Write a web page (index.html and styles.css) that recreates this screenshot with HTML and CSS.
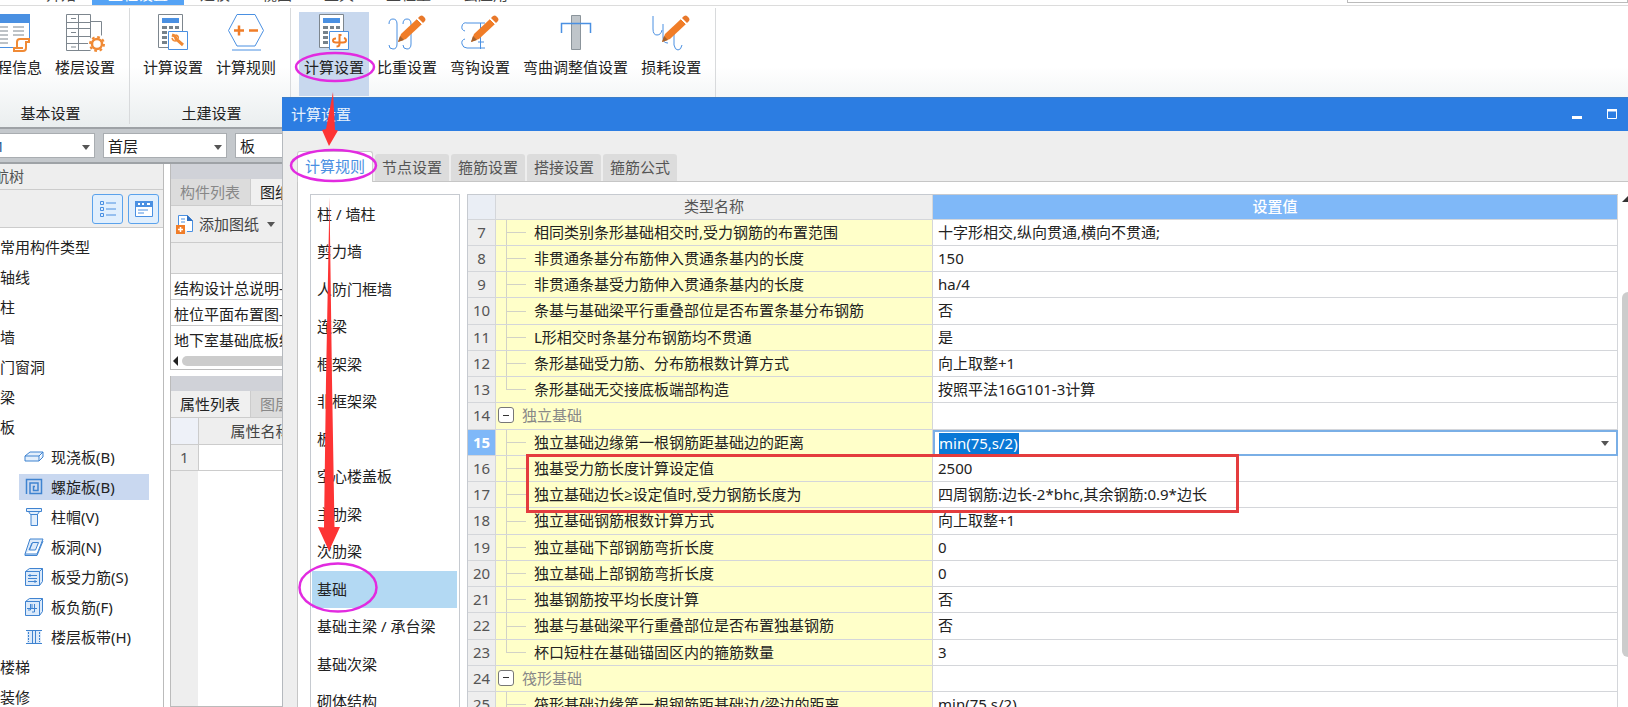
FILE: index.html
```html
<!DOCTYPE html>
<html lang="zh-CN">
<head>
<meta charset="utf-8">
<title>计算设置</title>
<link rel="stylesheet" href="styles.css">
</head>
<body>
<svg width="0" height="0" class="defs" aria-hidden="true">
  <defs>
    <g id="calc">
      <path d="M4.500.5h24v33h-24z" fill="#fff" stroke="#7d868e"/>
      <path d="M8 4h17v5H8z" fill="#4a90e2"/>
      <path d="M8 12h5v3H8zM15 12h4v3h-4zM21 12h4v3h-4zM8 17h5v3H8zM8 22h5v3H8zM8 27h5v3H8z" fill="#76828b"/>
      <path d="M14.500 17.500h19v18h-19z" fill="#fff" stroke="#4a90e2"/>
    </g>
    <g id="pencil">
      <path d="M10 28l3-8 16-15 5 5-16 15z" fill="#f07d28"/>
      <path d="M30 4l2-2q2-1 3 0l2 2q1 2 0 3l-2 2z" fill="#e8782a"/>
      <path d="M28.500 4.500l6 6" stroke="#fff"/>
      <path d="M10 28l2-6 4 4z" fill="#a3622f"/>
    </g>
  </defs>
</svg>

<div class="app">
  <nav class="menu">
    <a class="menu-tab" href="#">开始</a>
    <a class="menu-tab menu-on" href="#">工程设置</a>
    <a class="menu-tab" href="#">建模</a>
    <a class="menu-tab" href="#">视图</a>
    <a class="menu-tab" href="#">工具</a>
    <a class="menu-tab" href="#">工程量</a>
    <a class="menu-tab" href="#">云应用</a>
    <input class="menu-search" type="text" aria-label="搜索">
  </nav>

  <div class="ribbon">
    <section class="group group-first">
      <div class="tools">
        <button class="tool"><svg viewBox="0 0 38 38"><path d="M-2 .5h38.500v33H-2z" fill="#fff" stroke="#4a90e2"/><path d="M-2 0h39v9H-2z" fill="#4a90e2"/><path d="M4 13h11M20 13h11M4 17h11M20 17h11M4 21h11M20 21h11M4 25h11M4 29h11" stroke="#7d868e"/><path d="M22 24h16v14H20V24z" fill="#fff"/><path d="M24 34V28q0-3 3-3h9v3h-3v6q0 3-3 3h-9v-3h9" fill="none" stroke="#f08a35" stroke-width="2"/></svg>工程信息</button>
        <button class="tool"><svg viewBox="0 0 38 38"><path d="M.5.500h24v36H.5zM12.500.500v36M.5 8.500h24M.5 14.500h24M.5 22.500h24M.5 29.500h24M24.500 7.500h11v14M5 4.500h5M5 18.500h5M5 33h5" fill="none" stroke="#7d868e"/><circle cx="31" cy="30" r="9" fill="#fff"/><circle cx="31" cy="30" r="5" fill="none" stroke="#f08a35" stroke-width="2.500"/><circle cx="31" cy="30" r="7" fill="none" stroke="#f08a35" stroke-width="2" stroke-dasharray="2.750 2.750"/></svg>楼层设置</button>
      </div>
      <h2 class="group-name">基本设置</h2>
    </section>
    <section class="group">
      <div class="tools">
        <button class="tool"><svg viewBox="0 0 38 38"><use href="#calc"/><path d="M18 21l3 1 1 3 7 6" fill="none" stroke="#f08a35" stroke-width="3"/><path d="M18 24q1 4 5 2.500M22 21q3 1 2 4" fill="none" stroke="#f08a35" stroke-width="1.500"/></svg>计算设置</button>
        <button class="tool"><svg viewBox="0 0 38 38"><path d="M10 .5h18l8.500 16-8.500 15.500H10L1.500 16.500zM5 36h29" fill="none" stroke="#4a90e2"/><path d="M7 16.500h10M12 11.500v10M22 16.500h9" stroke="#f07d28" stroke-width="2.500"/></svg>计算规则</button>
      </div>
      <h2 class="group-name">土建设置</h2>
    </section>
    <section class="group">
      <div class="tools">
        <button class="tool tool-on"><svg viewBox="0 0 38 38"><use href="#calc"/><path d="M21 24.500q-3 0-3 2t3 2h7q3 0 3-2t-2-2.500M26.500 21h-2v9q0 2.500-3 2.500" fill="none" stroke="#f07d28" stroke-width="2"/></svg>计算设置</button>
        <button class="tool"><svg viewBox="0 0 38 38"><path d="M1 10q0-5 4-5t4 5v20q0 5-4 5t-4-4M15 10q0-5 4-5t4 5v20q0 5-4 5t-4-4" fill="none" stroke="#4a90e2"/><use href="#pencil"/></svg>比重设置</button>
        <button class="tool"><svg viewBox="0 0 38 38"><path d="M4 17q-4-1-3-5t5-3h18M4 25q-4 1-3 5t5 4h18M19.500 9v26M17 28h6" fill="none" stroke="#4a90e2"/><use href="#pencil"/></svg>弯钩设置</button>
        <button class="tool"><svg viewBox="0 0 38 38"><path d="M14.500 1.500h9v34h-9z" fill="#bfc5ca" stroke="#8b949b"/><path d="M4.500 19V9.500h29V19" fill="none" stroke="#4a90e2" stroke-width="1.500"/></svg>弯曲调整值设置</button>
        <button class="tool"><svg viewBox="0 0 38 38"><path d="M1 2v13q0 6 4 6t5-5M11 10v14q0 5 5 5M22 17v14q1 5 4 5t4-5" fill="none" stroke="#4a90e2"/><use href="#pencil"/></svg>损耗设置</button>
      </div>
    </section>
  </div>

  <div class="pickers">
    <div class="picker picker-unit"><select aria-label="单位工程"><option>1</option></select></div>
    <div class="picker"><select aria-label="楼层"><option>首层</option></select></div>
    <div class="picker"><select aria-label="构件"><option>板</option></select></div>
  </div>

  <div class="work">
    <aside class="nav">
      <h2 class="nav-title">导航树</h2>
      <div class="nav-bar">
        <button class="view" aria-label="列表"><svg viewBox="0 0 20 20"><path d="M2.500 2.500h3v3h-3zM2.500 8.500h3v3h-3zM2.500 14.500h3v3h-3zM8 4h10M8 10h10M8 16h10" fill="none" stroke="#4a90e2"/></svg></button>
        <button class="view" aria-label="窗口"><svg viewBox="0 0 20 20"><path d="M1.500 2.500h17v15h-17z" fill="#fff" stroke="#4a90e2"/><path d="M1 2h18v6H1z" fill="#4a90e2"/><path d="M4 5h2M8 5h2M13 5h3" stroke="#fff" stroke-width="2"/><path d="M4 11h10M4 14h6" stroke="#4a90e2"/></svg></button>
      </div>
      <ul class="tree">
        <li>常用构件类型</li>
        <li>轴线</li>
        <li>柱</li>
        <li>墙</li>
        <li>门窗洞</li>
        <li>梁</li>
        <li>板
          <ul class="subtree">
            <li><span class="node"><svg viewBox="0 0 20 20"><path d="M1 9l5-4h13l-4 4zM1 9v5h14V9M15 14l4-4V5" fill="#e3effc" stroke="#3f83d0"/></svg>现浇板(B)</span></li>
            <li><span class="node node-on"><svg viewBox="0 0 20 20"><path d="M2.500 17V2.500h15v14H6V6h8v7.500H9.500v-4H11" fill="none" stroke="#3f83d0" stroke-width="1.500"/></svg>螺旋板(B)</span></li>
            <li><span class="node"><svg viewBox="0 0 20 20"><path d="M2.500 1.500h15v3h-15zM4.500 4.500l2 3h7l2-3M7 7.500h6.500v11H7z" fill="#e3effc" stroke="#3f83d0"/></svg>柱帽(V)</span></li>
            <li><span class="node"><svg viewBox="0 0 20 20"><path d="M6 2h13l-6 15H1zM1 17v1.500h12L19 4M8.500 5.500h6l-3 7.500h-6z" fill="#dceafa" stroke="#3f83d0"/><path d="M8 6l-3 7" stroke="#3f83d0"/></svg>板洞(N)</span></li>
            <li><span class="node"><svg viewBox="0 0 20 20"><path d="M1.500 4.500l4-3h13v13l-3 4M15.500 4.500l3-3M1.500 4.500h14v14h-14z" fill="#dceafa" stroke="#3f83d0"/><path d="M4 8.500h9M4 14.500h9M4 11.500h9M6 7v3M11 13v3" stroke="#3f83d0"/></svg>板受力筋(S)</span></li>
            <li><span class="node"><svg viewBox="0 0 20 20"><path d="M1.500 4.500l4-3h13v13l-3 4M15.500 4.500l3-3M1.500 4.500h14v14h-14z" fill="#dceafa" stroke="#3f83d0"/><path d="M6.500 7v6H4M10.500 7v8H8M3 11.500h10M8 7v4" fill="none" stroke="#3f83d0"/></svg>板负筋(F)</span></li>
            <li><span class="node"><svg viewBox="0 0 20 20"><path d="M3 3h14v14H3z" fill="#dceafa"/><path d="M2 3.500h16M2 16.500h16M8.500 4v12M11.500 4v12" stroke="#3f83d0"/><path d="M4.500 5v10M15.500 5v10" stroke="#3f83d0" stroke-dasharray="2 1"/></svg>楼层板带(H)</span></li>
          </ul>
        </li>
        <li>楼梯</li>
        <li>装修</li>
      </ul>
    </aside>

    <div class="side">
      <section class="panel">
        <div class="panel-cap"></div>
        <div class="panel-tabs"><button class="ptab">构件列表</button><button class="ptab ptab-on">图纸管理</button></div>
        <button class="add"><svg viewBox="0 0 20 20"><path d="M3.500 11V1.500h9l5 5v11H12" fill="#fff" stroke="#4a90e2"/><path d="M12 1v6h6z" fill="#2f6fc0"/><path d="M6 5h4M6 8h4" stroke="#4a90e2"/><path d="M1 11h9v9H1z" fill="#f07d28"/><path d="M3 15.500h5M5.500 13v5" stroke="#fff" stroke-width="1.500"/></svg>添加图纸<i class="caret"></i></button>
        <div class="sheet-head"></div>
        <ul class="sheets">
          <li>结构设计总说明-1</li>
          <li>桩位平面布置图-1</li>
          <li>地下室基础底板结构</li>
        </ul>
        <div class="hscroll"><i class="hscroll-arrow"></i><i class="hscroll-bar"></i></div>
      </section>
      <section class="panel panel-props">
        <div class="panel-cap"></div>
        <div class="panel-tabs"><button class="ptab ptab-on">属性列表</button><button class="ptab">图层管理</button></div>
        <table class="props">
          <thead><tr><th class="props-no"></th><th class="props-name">属性名称</th></tr></thead>
          <tbody><tr><td class="props-no">1</td><td></td></tr></tbody>
        </table>
        <div class="props-rest"></div>
      </section>
    </div>
  </div>

  <div class="dialog" role="dialog" aria-labelledby="dialog-title">
    <header class="title">
      <h1 id="dialog-title">计算设置</h1>
      <button class="win" aria-label="最小化"><svg viewBox="0 0 12 12"><path d="M1 8h10v3H1z" fill="#fff"/></svg></button>
      <button class="win" aria-label="最大化"><svg viewBox="0 0 12 12"><path d="M1.500 2h9v8.500h-9z" fill="none" stroke="#fff"/><path d="M1 1h10v2.500H1z" fill="#fff"/></svg></button>
    </header>
    <div class="tabs" role="tablist">
      <button class="tab tab-on" role="tab">计算规则</button>
      <button class="tab" role="tab">节点设置</button>
      <button class="tab" role="tab">箍筋设置</button>
      <button class="tab" role="tab">搭接设置</button>
      <button class="tab" role="tab">箍筋公式</button>
    </div>
    <div class="pane">
      <ul class="kinds">
        <li>柱 / 墙柱</li>
        <li>剪力墙</li>
        <li>人防门框墙</li>
        <li>连梁</li>
        <li>框架梁</li>
        <li>非框架梁</li>
        <li>板</li>
        <li>空心楼盖板</li>
        <li>主肋梁</li>
        <li>次肋梁</li>
        <li class="kind-on">基础</li>
        <li>基础主梁 / 承台梁</li>
        <li>基础次梁</li>
        <li>砌体结构</li>
      </ul>
      <div class="grid">
        <table class="rules">
          <colgroup><col class="col-no"><col class="col-name"><col></colgroup>
          <thead><tr><th></th><th>类型名称</th><th class="th-on">设置值</th></tr></thead>
          <tbody>
            <tr><th>7</th><td class="leaf">相同类别条形基础相交时,受力钢筋的布置范围</td><td>十字形相交,纵向贯通,横向不贯通;</td></tr>
            <tr><th>8</th><td class="leaf">非贯通条基分布筋伸入贯通条基内的长度</td><td>150</td></tr>
            <tr><th>9</th><td class="leaf">非贯通条基受力筋伸入贯通条基内的长度</td><td>ha/4</td></tr>
            <tr><th>10</th><td class="leaf">条基与基础梁平行重叠部位是否布置条基分布钢筋</td><td>否</td></tr>
            <tr><th>11</th><td class="leaf">L形相交时条基分布钢筋均不贯通</td><td>是</td></tr>
            <tr><th>12</th><td class="leaf">条形基础受力筋、分布筋根数计算方式</td><td>向上取整+1</td></tr>
            <tr><th>13</th><td class="leaf leaf-last">条形基础无交接底板端部构造</td><td>按照平法16G101-3计算</td></tr>
            <tr><th>14</th><td class="branch"><div class="branch-in"><button class="fold" aria-label="折叠"></button>独立基础</div></td><td></td></tr>
            <tr><th class="no-on">15</th><td class="leaf">独立基础边缘第一根钢筋距基础边的距离</td><td class="edit"><div class="combo"><input type="text" value="min(75,s/2)" aria-label="设置值"><button class="drop" aria-label="展开"><i class="caret"></i></button></div></td></tr>
            <tr><th>16</th><td class="leaf">独基受力筋长度计算设定值</td><td>2500</td></tr>
            <tr><th>17</th><td class="leaf">独立基础边长≥设定值时,受力钢筋长度为</td><td>四周钢筋:边长-2*bhc,其余钢筋:0.9*边长</td></tr>
            <tr><th>18</th><td class="leaf">独立基础钢筋根数计算方式</td><td>向上取整+1</td></tr>
            <tr><th>19</th><td class="leaf">独立基础下部钢筋弯折长度</td><td>0</td></tr>
            <tr><th>20</th><td class="leaf">独立基础上部钢筋弯折长度</td><td>0</td></tr>
            <tr><th>21</th><td class="leaf">独基钢筋按平均长度计算</td><td>否</td></tr>
            <tr><th>22</th><td class="leaf">独基与基础梁平行重叠部位是否布置独基钢筋</td><td>否</td></tr>
            <tr><th>23</th><td class="leaf leaf-last">杯口短柱在基础锚固区内的箍筋数量</td><td>3</td></tr>
            <tr><th>24</th><td class="branch"><div class="branch-in"><button class="fold" aria-label="折叠"></button>筏形基础</div></td><td></td></tr>
            <tr><th>25</th><td class="leaf">筏形基础边缘第一根钢筋距基础边/梁边的距离</td><td>min(75,s/2)</td></tr>
          </tbody>
        </table>
      </div>
      <div class="vscroll"><i class="vscroll-arrow"></i><i class="vscroll-bar"></i></div>
    </div>
  </div>

  <svg class="marks" width="1628" height="707" viewBox="0 0 1628 707" aria-hidden="true">
    <g fill="none" stroke="#e22be0" stroke-width="2.500">
      <ellipse cx="335" cy="67" rx="39" ry="14"/>
      <ellipse cx="333.500" cy="165.500" rx="42.500" ry="15.500"/>
      <ellipse cx="338" cy="587.500" rx="38.500" ry="24"/>
    </g>
    <g fill="#fd3434">
      <path d="M333 92l2 38 3 .5-9 15.500-7-16 4-1z"/>
      <path d="M329.500 197l2.500 183 2.500 147h5.500l-11 24-11-24 6 .5L326 380z"/>
    </g>
    <path d="M527.500 455.500h710v56h-710z" fill="none" stroke="#e43c3e" stroke-width="3"/>
  </svg>
</div>
</body>
</html>
```

FILE: styles.css
```css
* {
  box-sizing: border-box;
}

body {
  margin: 0;
  font-family: "Noto Sans", "Open Sans", "Noto Sans CJK SC", sans-serif;
  font-size: 15px;
  line-height: 20px;
  color: #222;
}

button,
input,
select {
  margin: 0;
  padding: 0;
  border: 0;
  background: none;
  font: inherit;
  color: inherit;
}

h1,
h2 {
  margin: 0;
  font-size: 15px;
  font-weight: 400;
}

ul {
  margin: 0;
  padding: 0;
  list-style: none;
}

.defs {
  position: absolute;
}

.app {
  position: relative;
  display: flex;
  flex-direction: column;
  height: 100vh;
  overflow: hidden;
  background: #fff;
  white-space: nowrap;
}

/* Menu strip */
.menu {
  display: flex;
  align-items: flex-end;
  flex: none;
  height: 6px;
  padding-left: 30px;
  border-bottom: 1px solid #dcdcdc;
  overflow: hidden;
}

.menu-tab {
  padding: 0 16px;
  line-height: 22px;
  color: #444;
  text-decoration: none;
}

.menu-on {
  background: #55a3f5;
  color: #fff;
}

.menu-search {
  width: 281px;
  height: 20px;
  margin: 0 0 2px auto;
  border: 1px solid #bbb;
}

/* Ribbon */
.ribbon {
  display: flex;
  flex: none;
  height: 121px;
  background: linear-gradient(#fff 50%, #eaeeef);
}

.group {
  display: flex;
  flex-direction: column;
  margin: 2px 0 3px;
  padding: 4px 9px 0 8px;
  border-right: 1px solid #d8dadc;
}

.group-first {
  margin-left: -31px;
}

.tools {
  display: flex;
  gap: 3px;
}

.tool {
  display: flex;
  flex-direction: column;
  align-items: center;
  height: 84px;
  padding: 2px 5px;
  line-height: 24px;
}

.tool svg {
  width: 38px;
  height: 38px;
  margin-bottom: 3px;
  overflow: visible;
}

.tool-on {
  background: #c8d8ee;
}

.group-name {
  margin-top: auto;
  padding-left: 4px;
  line-height: 22px;
  text-align: center;
}

/* Drop-down row */
.pickers {
  display: flex;
  gap: 8px;
  flex: none;
  height: 37px;
  padding: 4px 0 4px;
  border-top: 2px solid #9ea2a6;
  border-bottom: 2px solid #9ea2a6;
  background: #c4c8cc;
}

.picker {
  position: relative;
  width: 124px;
  border: 1px solid #a9adb1;
  background: #fff;
}

.picker-unit {
  margin-left: -29px;
}

.picker select {
  width: 100%;
  height: 100%;
  padding: 0 4px;
  appearance: none;
}

.picker-unit select {
  padding-left: 24px;
  color: #2a5d92;
}

.picker::after,
.caret {
  border: 4px solid transparent;
  border-top: 5px solid #555;
  border-bottom: 0;
}

.picker::after {
  content: "";
  position: absolute;
  top: 11px;
  right: 4px;
}

/* Work area */
.work {
  display: flex;
  gap: 6px;
  flex: 1;
  min-height: 0;
}

.nav {
  width: 164px;
  flex: none;
  border-right: 1px solid #bbb;
  overflow: hidden;
}

.nav-title {
  height: 26px;
  padding-top: 2px;
  margin-left: -21px;
  background: #eee;
  border-bottom: 1px solid #ccc;
  color: #555;
}

.nav-bar {
  display: flex;
  justify-content: flex-end;
  gap: 5px;
  height: 38px;
  padding: 4px 4px 3px;
  background: #eee;
  border-bottom: 1px solid #ccc;
}

.view {
  display: grid;
  place-items: center;
  width: 31px;
  height: 30px;
  border: 1px solid #5aa2ec;
  border-radius: 3px;
  background: #e1effd;
}

.view svg,
.node svg,
.add svg {
  width: 20px;
  height: 20px;
}

.tree {
  padding-top: 4px;
  line-height: 30px;
}

.subtree {
  padding-left: 19px;
}

.subtree li {
  height: 30px;
  padding-top: 2px;
}

.node {
  display: flex;
  align-items: center;
  gap: 7px;
  width: 130px;
  height: 26px;
  padding-left: 5px;
}

.node-on {
  background: #c9d8f0;
}

.side {
  display: flex;
  flex-direction: column;
  gap: 6px;
  flex: 1;
}

.panel {
  border-left: 1px solid #bbb;
  border-bottom: 1px solid #bbb;
}

.panel-cap {
  height: 15px;
  background: #d0d2d8;
}

.panel-tabs {
  display: flex;
  height: 27px;
  background: #dcdcdc;
  border-bottom: 1px solid #ccc;
}

.ptab {
  padding: 0 10px 0 9px;
  border-right: 1px solid #ccc;
  color: #888;
}

.ptab-on {
  background: #f0f0f0;
  color: #222;
}

.add {
  display: flex;
  align-items: center;
  width: 100%;
  height: 37px;
  padding-left: 4px;
  background: #eee;
  border-bottom: 1px solid #ccc;
  gap: 4px;
  color: #444;
}

.add .caret {
  margin-left: 4px;
}

.sheet-head {
  height: 31px;
  background: #eee;
  border-bottom: 1px solid #ccc;
}

.sheets li {
  height: 26px;
  padding-left: 3px;
  border-bottom: 1px solid #ccc;
  line-height: 28px;
}

.sheets li:last-child {
  border-bottom: 0;
}

.hscroll {
  display: flex;
  align-items: center;
  gap: 4px;
  height: 17px;
  padding-left: 2px;
}

.hscroll-arrow {
  border: 5px solid transparent;
  border-right-color: #222;
  border-left: 0;
}

.hscroll-bar {
  flex: 1;
  height: 10px;
  border-radius: 5px;
  background: #ccc;
}

.panel-props {
  display: flex;
  flex-direction: column;
  flex: 1;
}

.props {
  width: 100%;
  table-layout: fixed;
  border-collapse: collapse;
}

.props th,
.props td {
  height: 26px;
  padding: 0;
  border: 1px solid #ccc;
  border-width: 0 1px 1px 0;
}

.props th {
  background: #eee;
  font-weight: 400;
  color: #444;
}

.props .props-no {
  width: 27px;
  background: #eee;
  text-align: center;
  color: #555;
}

.props th.props-no {
  background: #eef1f8;
}

.props .props-name {
  padding-left: 32px;
  text-align: left;
}

.props-rest {
  flex: 1;
  width: 27px;
  background: #eee;
}

/* Dialog window */
.dialog {
  position: absolute;
  top: 97px;
  right: 0;
  bottom: 0;
  left: 282px;
  display: flex;
  flex-direction: column;
  border-left: 1px solid #b5b9be;
  background: #eee;
}

.title {
  display: flex;
  align-items: center;
  gap: 23px;
  flex: none;
  height: 34px;
  margin-left: -1px;
  padding: 0 10px 2px 9px;
  border-top: 1px solid #3b7dc8;
  background: #2c7de2;
  color: #e6f0fc;
}

.title h1 {
  flex: 1;
}

.win {
  width: 12px;
  height: 12px;
}

.win svg {
  display: block;
}

.tabs {
  display: flex;
  align-items: flex-end;
  gap: 2px;
  flex: none;
  height: 50px;
  padding-left: 14px;
}

.tab {
  height: 27px;
  padding: 0 7px 2px;
  border-radius: 3px 3px 0 0;
  background: #dcdcdc;
  color: #555;
}

.tab-on {
  height: 31px;
  margin-bottom: -1px;
  border: 1px solid #ccc;
  border-bottom: 0;
  background: #fff;
  color: #4a90e2;
}

.tabs {
  position: relative;
  z-index: 1;
}

.pane {
  display: flex;
  flex: 1;
  min-height: 0;
  margin-left: 14px;
  padding: 12px 0 0 12px;
  border: 1px solid #c6c6c6;
  border-width: 1px 0 0 1px;
  background: #fff;
}

.kinds {
  width: 150px;
  flex: none;
  margin-right: 7px;
  padding: 1px 2px 0 1px;
  border: 1px solid #c6cad0;
  border-bottom: 0;
  overflow: hidden;
}

.kinds li {
  height: 37px;
  padding-left: 5px;
  line-height: 37px;
}

.kinds li:nth-child(even) {
  height: 38px;
}

.kinds .kind-on {
  background: #b3d9f3;
}

.grid {
  flex: 1;
  overflow: hidden;
  border: 1px solid #c6cad0;
  border-width: 1px 0 0 1px;
}

.rules {
  width: 100%;
  table-layout: fixed;
  border-collapse: separate;
  border-spacing: 0;
}

.col-no {
  width: 28px;
}

.col-name {
  width: 38%;
}

.rules th,
.rules td {
  height: 26px;
  padding: 0 0 2px;
  border: 1px solid #d4d6da;
  border-width: 0 1px 1px 0;
  line-height: 20px;
}

.rules tbody tr:nth-child(4n) > * {
  height: 27px;
}

.rules th {
  background: #eee;
  color: #555;
  font-weight: 400;
}

.rules thead th {
  height: 25px;
}

.rules thead th:first-child {
  background: #eaeef5;
}

.rules .th-on {
  background: #7fb8f8;
  color: #fff;
  font-weight: 500;
}

.rules .no-on {
  background: #7fb8f8;
  color: #fff;
  font-weight: 700;
}

.rules td {
  padding-left: 5px;
}

.rules .leaf,
.rules .branch {
  background-color: #ffffc9;
}

.rules .leaf {
  padding-left: 38px;
  background-image: linear-gradient(#d2d2c6, #d2d2c6), linear-gradient(#d2d2c6, #d2d2c6);
  background-position: 10px 0, 10px 50%;
  background-size: 1px 100%, 20px 1px;
  background-repeat: no-repeat;
}

.rules .leaf-last {
  background-size: 1px 50%, 20px 1px;
}

.rules .branch {
  padding-left: 2px;
  color: #888;
}

.branch-in {
  display: flex;
  align-items: center;
  gap: 8px;
}

.fold {
  display: grid;
  place-items: center;
  width: 16px;
  height: 16px;
  border: 1px solid #777;
  border-radius: 3px;
  background: #fff;
}

.fold::before {
  content: "";
  width: 6px;
  height: 1px;
  background: #333;
}

.rules .edit {
  padding: 0;
  border: 0;
}

.combo {
  display: flex;
  align-items: center;
  justify-content: space-between;
  height: 26px;
  padding: 0 7px 0 4px;
  border: 2px solid #7aafe6;
}

.combo input {
  width: 80px;
  height: 21px;
  background: #0a78d6;
  color: #fff;
}

.drop {
  display: grid;
  place-items: center;
  height: 20px;
}

.vscroll {
  display: flex;
  flex-direction: column;
  width: 10px;
  flex: none;
  padding: 2px 0 50px 4px;
  overflow: hidden;
}

.vscroll-arrow {
  width: 12px;
  border: 6px solid transparent;
  border-top: 0;
  border-bottom-color: #333;
}

.vscroll-bar {
  flex: 1;
  width: 12px;
  margin-top: 90px;
  border-radius: 6px;
  background: #ccc;
}

/* Marks drawn over the window */
.marks {
  position: absolute;
  z-index: 2;
  top: 0;
  left: 0;
  pointer-events: none;
}
```
